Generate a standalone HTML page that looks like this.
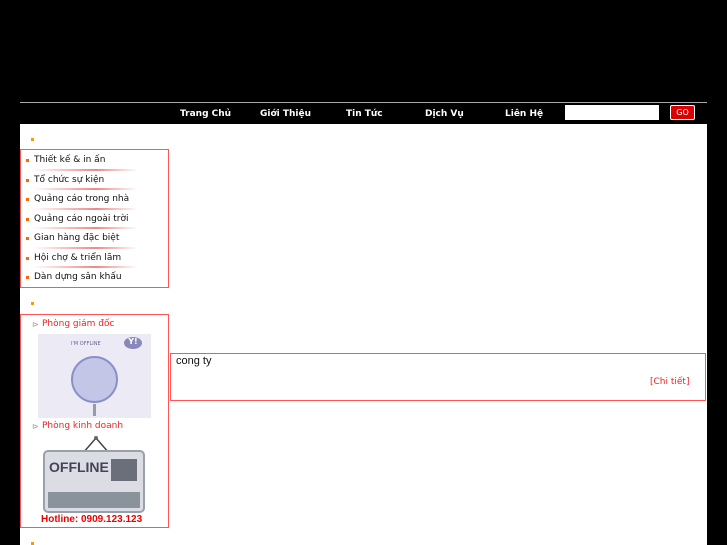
<!DOCTYPE html>
<html><head><meta charset="utf-8"><style>
*{margin:0;padding:0;box-sizing:border-box}
body{width:727px;height:545px;background:#000;position:relative;overflow:hidden;font-family:"DejaVu Sans","Liberation Sans",sans-serif}
.abs{position:absolute}
.line{left:20px;top:102px;width:687px;height:1px;background:#aaa}
.nav{top:104px;height:19px;color:#fff;font-size:9px;font-weight:bold;line-height:18px}
.content{left:20px;top:124px;width:687px;height:421px;background:#fff}
.dot{width:3px;height:3px;background:#f90}
.box{border:1px solid #f55;background:#fff}
.item{position:absolute;left:13px;font-size:9px;color:#111;line-height:12px}
.item:before{content:"";position:absolute;left:-8px;top:5px;width:3px;height:3px;background:#f60}
.sep{position:absolute;left:12px;width:105px;height:2px;background:linear-gradient(90deg,#fff,#e88 60%,#fff)}
.red{color:#e22;font-size:9px}
</style></head><body>
<div class="abs line"></div>
<div class="abs nav" style="left:180px;top:105px">Trang Chủ</div>
<div class="abs nav" style="left:260px;top:105px">Giới Thiệu</div>
<div class="abs nav" style="left:346px;top:105px">Tin Tức</div>
<div class="abs nav" style="left:425px;top:105px">Dịch Vụ</div>
<div class="abs nav" style="left:505px;top:105px">Liên Hệ</div>
<div class="abs" style="left:565px;top:105px;width:94px;height:15px;background:#fff"></div>
<div class="abs" style="left:670px;top:105px;width:25px;height:15px;background:#d00;border:1px solid #fff;border-radius:2px;color:#fff;font-size:8px;text-align:center;line-height:13px">GO</div>
<div class="abs content"></div>
<div class="abs dot" style="left:31px;top:138px"></div>
<div class="abs box" style="left:20px;top:149px;width:149px;height:139px">
<div class="item" style="top:4px">Thiết kế &amp; in ấn</div><div class="sep" style="top:19px"></div>
<div class="item" style="top:24px">Tổ chức sự kiện</div><div class="sep" style="top:38px"></div>
<div class="item" style="top:43px">Quảng cáo trong nhà</div><div class="sep" style="top:58px"></div>
<div class="item" style="top:63px">Quảng cáo ngoài trời</div><div class="sep" style="top:77px"></div>
<div class="item" style="top:82px">Gian hàng đặc biệt</div><div class="sep" style="top:97px"></div>
<div class="item" style="top:102px">Hội chợ &amp; triển lãm</div><div class="sep" style="top:116px"></div>
<div class="item" style="top:121px">Dàn dựng sân khấu</div>
</div>
<div class="abs dot" style="left:31px;top:302px"></div>
<div class="abs box" style="left:20px;top:314px;width:149px;height:214px">
<div class="abs" style="left:11px;top:5px;font-size:8px;color:#999">⊳</div>
<div class="abs red" style="left:21px;top:4px">Phòng giám đốc</div>
<div class="abs" style="left:17px;top:19px;width:113px;height:84px;background:#eceaf4">
<div class="abs" style="left:33px;top:7px;font-size:5px;color:#669">I'M OFFLINE</div>
<div class="abs" style="left:86px;top:3px;width:18px;height:12px;border-radius:50%;background:#8888bb;color:#fff;font-size:8px;font-weight:bold;text-align:center">Y!</div>
<div class="abs" style="left:33px;top:22px;width:47px;height:47px;border-radius:50%;background:#c4c6e8;border:2px solid #8890c8"></div>
<div class="abs" style="left:55px;top:70px;width:3px;height:12px;background:#99a"></div>
</div>
<div class="abs" style="left:11px;top:107px;font-size:8px;color:#999">⊳</div>
<div class="abs red" style="left:21px;top:106px">Phòng kinh doanh</div>
<svg class="abs" style="left:60px;top:120px" width="30" height="20"><path d="M2 18 L15 3 L28 18" stroke="#444" stroke-width="1.5" fill="none"/><circle cx="15" cy="3" r="2" fill="#666"/></svg>
<div class="abs" style="left:22px;top:135px;width:102px;height:63px;background:#dcdce4;border:2px solid #9aa0aa;border-radius:5px">
<div class="abs" style="left:4px;top:7px;font-size:14px;font-weight:bold;color:#445;font-family:'Liberation Sans Narrow','Liberation Sans',sans-serif">OFFLINE</div>
<div class="abs" style="left:66px;top:7px;width:26px;height:22px;background:#6a707a"></div>
<div class="abs" style="left:3px;top:40px;width:92px;height:16px;background:#8a929c"></div>
</div>
<div class="abs" style="left:20px;top:199px;font-size:10px;font-weight:bold;color:#e00;font-family:'Liberation Sans',sans-serif">Hotline: 0909.123.123</div>
</div>
<div class="abs dot" style="left:31px;top:542px"></div>
<div class="abs box" style="left:170px;top:353px;width:536px;height:48px">
<div class="abs" style="left:5px;top:1px;font-size:11px;color:#111;font-family:'Liberation Sans',sans-serif">cong ty</div>
<div class="abs red" style="left:479px;top:23px">[Chi tiết]</div>
</div>
</body></html>
